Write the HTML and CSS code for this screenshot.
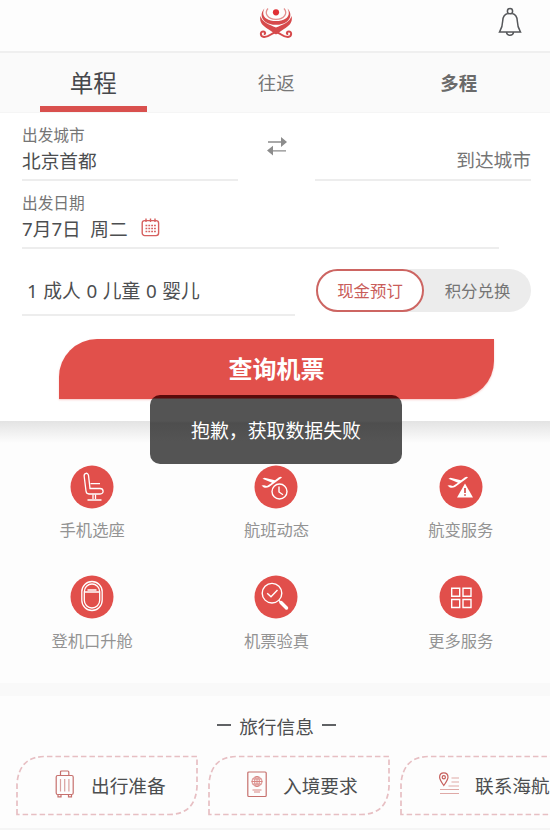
FILE: index.html
```html
<!DOCTYPE html>
<html lang="zh-CN">
<head>
<meta charset="utf-8">
<title>机票预订</title>
<link rel="stylesheet" href="styles.css">
</head>
<body>
<div class="app">
  <header class="header">
    <svg class="logo" width="34" height="32" viewBox="0 0 34 32" fill="none" stroke="#d64a4c">
      <circle cx="17" cy="5.300" r="3.100" fill="#e02e34" stroke="none"/>
      <path d="M9 1.500C5 6 8.500 12.300 17 12.300S29 6 25 1.500" stroke="#e3908f" stroke-width="1.300"/>
      <path d="M5.500 1.500C-1.500 9 5 17.800 17 17.800S35.500 9 28.500 1.500C32.500 8.500 27 14 17 14S1.500 8.500 5.500 1.500Z" fill="#d64a4c" stroke="none"/>
      <path d="M1.500 9C3 15 10 17.500 17 20.500C24 17.500 31 15 32.500 9C34.500 16.500 28 20 23.500 23L17 27.500L10.500 23C6 20 -.5 16.500 1.500 9Z" fill="#d64a4c" stroke="none"/>
      <path d="M17 25.500C13 25 10.500 30.300 5 30C.8 29.500 1 24.400 4.300 24.400C6.500 24.400 6.800 27.200 4.800 27.200M17 25.500C21 25 23.500 30.300 29 30C33.200 29.500 33 24.400 29.700 24.400C27.500 24.400 27.200 27.200 29.200 27.200" stroke-width="2"/>
    </svg>
    <svg class="bell" width="24" height="32" viewBox="0 0 24 32" fill="none" stroke="#55575a" stroke-width="1.500">
      <circle cx="12" cy="4.200" r="2.600"/>
      <path d="M9.800 6.500C5.900 7.400 4.800 10.300 4.700 14C4.600 19 3.600 21.500 1.600 24.900H22.400C20.400 21.500 19.400 19 19.300 14C19.200 10.300 18.100 7.400 14.200 6.500M8.500 25.500C9 29.200 15 29.200 15.500 25.500"/>
    </svg>
  </header>

  <nav class="tabs">
    <div class="tab tab-active">单程</div>
    <div class="tab">往返</div>
    <div class="tab tab-bold">多程</div>
  </nav>

  <section class="search">
    <div class="cities">
      <div class="field from">
        <div class="label">出发城市</div>
        <div class="value">北京首都</div>
      </div>
      <svg class="swap" width="22" height="20" viewBox="0 0 22 20" fill="#8c8c8c">
        <path d="M2 5.300H15V1L21 6L15 11V6.700H2ZM20 15.600H7V19.500L1 14.600L7 9.800V14.200H20Z"/>
      </svg>
      <div class="field to">到达城市</div>
    </div>
    <div class="field date">
      <div class="label">出发日期</div>
      <div class="value"><span class="day">7月7日</span><span>周二</span>
        <svg class="calendar" width="19" height="19" viewBox="0 0 19 19" fill="none" stroke="#d6605f" stroke-width="1.400">
          <rect x="1.200" y="2.600" width="16.400" height="15" rx="2.500"/>
          <path d="M5 .5V4M9.500 .5V4M14 .5V4"/>
          <path d="M4.500 7.500H15M4.500 10.500H15M4.500 13.500H15" stroke-width="1.700" stroke-dasharray="1.800 1.050"/>
        </svg>
      </div>
    </div>
    <div class="options">
      <div class="passengers">1 成人 0 儿童 0 婴儿</div>
      <div class="pay">
        <div class="pay-item pay-active">现金预订</div>
        <div class="pay-item">积分兑换</div>
      </div>
    </div>
    <div class="submit">查询机票
      <div class="toast">抱歉，获取数据失败</div>
    </div>
  </section>

  <section class="services">
    <div class="service">
      <svg width="44" height="44" viewBox="0 0 44 44" fill="none" stroke="#fff" stroke-width="1.300">
        <circle cx="22" cy="22" r="21.500" fill="#e14f4b" stroke="none"/>
        <path d="M14.200 11.500C13.600 7.600 18 7.200 18.500 10.400L20 23.500H30C34 23.500 34.300 29 30 29H19C17 29 16.200 28 16 26ZM20.500 18.700H30"/>
        <path d="M23 29.500V34M25.500 29.500V34M17.500 35H31.500"/>
      </svg>
      <span>手机选座</span>
    </div>
    <div class="service">
      <svg width="44" height="44" viewBox="0 0 44 44" fill="none" stroke="#fff">
        <circle cx="22" cy="22" r="21.500" fill="#e14f4b" stroke="none"/>
        <path d="M7.500 20.500L10 20.200L13 21L18 17.700L8.500 13.800L10.500 12.800L21 15.300L25 12.300Q27 11.100 28 12.200Q27.500 13 26 14L15 22Q12 23.500 9.500 22.200Z" fill="#fff" stroke="none"/>
        <circle cx="25.500" cy="26.500" r="7.500" stroke-width="1.400"/>
        <path d="M25 21.500V27L29 29.800" stroke-width="1.400"/>
      </svg>
      <span>航班动态</span>
    </div>
    <div class="service">
      <svg width="44" height="44" viewBox="0 0 44 44">
        <circle cx="22" cy="22" r="21.500" fill="#e14f4b"/>
        <path d="M8.500 20.500L11 20.200L14 21L19 17.700L9.500 13.800L11.500 12.800L22 15.300L26 12.300Q28 11.100 29 12.200Q28.500 13 27 14L16 22Q13 23.500 10.500 22.200Z" fill="#fff"/>
        <path d="M26 18.500L34 32.500H18Z" fill="#fff"/>
        <path d="M26 23V28M26 29.200V30.800" stroke="#d3423f" stroke-width="1.600"/>
      </svg>
      <span>航变服务</span>
    </div>
    <div class="service">
      <svg width="44" height="44" viewBox="0 0 44 44" fill="none" stroke="#fff" stroke-width="1.300">
        <circle cx="22" cy="22" r="21.500" fill="#e14f4b" stroke="none"/>
        <rect x="11.800" y="6.500" width="20.400" height="29" rx="10.200"/>
        <rect x="14.300" y="9" width="15.400" height="24" rx="7.700"/>
        <path d="M15 17H29M17.500 15H26.500"/>
      </svg>
      <span>登机口升舱</span>
    </div>
    <div class="service">
      <svg width="44" height="44" viewBox="0 0 44 44" fill="none" stroke="#fff">
        <circle cx="22" cy="22" r="21.500" fill="#e14f4b" stroke="none"/>
        <circle cx="18" cy="18.200" r="9.800" stroke-width="1.400"/>
        <path d="M13.200 18.200L17 21.800L23.500 15M24.500 25L27 27.500" stroke-width="1.400"/>
        <path d="M27 27.500L32.500 33" stroke-width="3.500" stroke-linecap="round"/>
      </svg>
      <span>机票验真</span>
    </div>
    <div class="service">
      <svg width="44" height="44" viewBox="0 0 44 44" fill="none" stroke="#fff" stroke-width="1.400">
        <circle cx="22" cy="22" r="21.500" fill="#e14f4b" stroke="none"/>
        <path d="M12.700 13.200H20.700V21.200H12.700ZM24 13.200H32V21.200H24ZM12.700 24.500H20.700V32.500H12.700ZM24 24.500H32V32.500H24Z"/>
      </svg>
      <span>更多服务</span>
    </div>
  </section>

  <section class="travel">
    <h2 class="travel-title"><i></i>旅行信息<i></i></h2>
    <div class="cards">
      <div class="card">
        <svg class="frame" width="182" height="61" viewBox="0 0 182 61"><path d="M1 59.500V29Q3 1.500 29 1.500H181V32Q179 59.500 153 59.500Z"/></svg>
        <svg width="20" height="28" viewBox="0 0 20 28" fill="none" stroke="#c6706d" stroke-width="1.200">
          <rect x="1.200" y="5.500" width="17" height="19" rx="1.500"/>
          <path d="M5.500 5V2Q5.500 1 6.500 1H12.800Q13.800 1 13.800 2V5M3 25V26.800H6V25M13.500 25V26.800H16.500V25"/>
          <path d="M5.500 9V21.500M9.700 9V21.500M13.900 9V21.500" stroke="#d9a09e"/>
        </svg>
        <span>出行准备</span>
      </div>
      <div class="card">
        <svg class="frame" width="182" height="61" viewBox="0 0 182 61"><path d="M1 59.500V29Q3 1.500 29 1.500H181V32Q179 59.500 153 59.500Z"/></svg>
        <svg width="20" height="28" viewBox="0 0 20 28" fill="none" stroke="#c6706d" stroke-width="1.200">
          <rect x=".8" y="2" width="18.400" height="24.500" rx="1"/>
          <g stroke="#d88683" stroke-width="1"><circle cx="10" cy="11.500" r="5"/><ellipse cx="10" cy="11.500" rx="2.300" ry="5"/><path d="M4.500 11.500H15.500M10 6.500V16.500M5.600 9H14.400M5.600 14H14.400M5.500 20H14.500M7 22H13"/></g>
        </svg>
        <span>入境要求</span>
      </div>
      <div class="card">
        <svg class="frame" width="182" height="61" viewBox="0 0 182 61"><path d="M1 59.500V29Q3 1.500 29 1.500H181V32Q179 59.500 153 59.500Z"/></svg>
        <svg width="20" height="28" viewBox="0 0 20 28" fill="none" stroke="#c6605d" stroke-width="1.200">
          <path d="M4.800 15.500C2 11.500 .6 9.500 .6 7.200C.6 1.300 9 1.300 9 7.200C9 9.500 7.600 11.500 4.800 15.500Z"/>
          <circle cx="4.800" cy="7.200" r="1.600"/>
          <path d="M12.500 8H20M12.500 12H20M9.500 16H20M1 19.500H20M1 23.500H20" stroke="#dfa9a6"/>
        </svg>
        <span>联系海航</span>
      </div>
    </div>
  </section>
</div>
</body>
</html>
```
FILE: styles.css
```css
* { box-sizing: border-box; }
body {
  margin: 0;
  background: #fdfdfd;
  color: #4c4e50;
  font-family: "Noto Sans", "Noto Sans CJK SC", sans-serif;
}
svg { display: block; flex: none; }
.app { width: 550px; height: 830px; overflow: hidden; border-bottom: 2px solid #f5f5f5; }

.header {
  height: 53px;
  display: grid;
  grid-template-columns: 1fr 34px 1fr;
  padding: 7px 28px 0 30px;
  border-bottom: 2px solid #efefef;
}
.logo { grid-column: 2; }
.bell { justify-self: end; }

.tabs {
  height: 60px;
  display: grid;
  grid-template-columns: repeat(3, 182.5px);
  padding-left: 2px;
  background: #fafafa;
  border-bottom: 1px solid #f5f5f5;
}
.tab {
  display: flex;
  align-items: center;
  justify-content: center;
  padding: 0 0 1px 1px;
  font-size: 18.5px;
  color: #777;
}
.tab-active {
  width: 107px;
  justify-self: center;
  border-bottom: 6px solid #d9504e;
  padding: 5px 0 0;
  font-size: 23.5px;
  color: #46484c;
}
.tab-bold { font-weight: 700; color: #6a6a6a; }

.search {
  height: 308px;
  padding: 10px 19px 0 22px;
  background: #fff;
}
.cities { height: 58px; display: flex; justify-content: space-between; }
.field { border-bottom: 2px solid #ededed; }
.from, .to { width: 216px; }
.label { height: 24px; line-height: 24px; font-size: 15.700px; color: #757575; }
.value { height: 28px; line-height: 28px; font-size: 18.700px; display: flex; align-items: center; }
.swap { margin-top: 13px; }
.to { padding-top: 22px; line-height: 30px; font-size: 18.700px; text-align: right; color: #757575; }
.date { width: 477px; height: 58px; margin-top: 10px; }
.day { margin-right: 9.500px; }
.calendar { margin: -3px 0 0 13.500px; }
.options { display: flex; justify-content: space-between; margin-top: 20px; }
.passengers {
  width: 273px;
  height: 47px;
  padding-left: 5px;
  line-height: 44px;
  font-size: 18.800px;
  word-spacing: .7px;
  border-bottom: 2px solid #ededed;
}
.pay { width: 215px; height: 43px; display: flex; border-radius: 22px; background: #ececec; }
.pay-item { width: 107px; line-height: 43px; text-align: center; font-size: 16.400px; color: #757575; }
.pay-active {
  width: 108px;
  border: 2px solid #cd6562;
  border-radius: 22px;
  background: #fff;
  color: #c95d5a;
  line-height: 39px;
}
.submit {
  position: relative;
  width: 435px;
  height: 60px;
  margin: 23px 0 0 37px;
  border-radius: 38px 0 38px 0;
  background: #e1504b;
  box-shadow: 0 1px 2px rgba(225, 80, 75, .3);
  color: #fff;
  text-align: center;
  line-height: 60px;
  font-size: 24px;
  font-weight: 700;
}
.toast {
  position: absolute;
  z-index: 2;
  top: 56px;
  left: 91px;
  width: 252px;
  height: 69px;
  border-radius: 10px;
  background: linear-gradient(#5a0b0b 0 3px, #545454 4px 26px, #4e4e4e 28px, #545454 46px);
  line-height: 72px;
  font-size: 18.900px;
  font-weight: 400;
}

.services {
  height: 262px;
  display: grid;
  grid-template-columns: repeat(3, 184.300px);
  grid-auto-rows: 110.500px;
  padding-top: 43.500px;
  background: linear-gradient(#e3e3e3, #fdfdfd 22px);
}
.service { display: flex; flex-direction: column; align-items: center; gap: 8.500px; }
.service span { line-height: 26px; font-size: 16.300px; color: #939393; }

.travel { border-top: 13px solid #f9f9f9; }
.travel-title {
  height: 59px;
  margin: 0;
  padding: 0 0 1px 3px;
  display: flex;
  align-items: center;
  justify-content: center;
  gap: 8px;
  font-size: 18.700px;
  font-weight: 400;
}
.travel-title i { width: 14px; height: 1.500px; background: #606265; }
.cards { display: flex; gap: 10px; padding-left: 16px; }
.card {
  position: relative;
  flex: none;
  width: 182px;
  height: 60px;
  display: flex;
  align-items: center;
  padding: 0 0 2px 38.500px;
  gap: 16.500px;
  font-size: 18.700px;
  white-space: nowrap;
}
.frame { position: absolute; top: -.5px; left: 0; fill: none; stroke: #e7bfc3; stroke-width: 1.700; stroke-dasharray: 5.500 3; }
```
